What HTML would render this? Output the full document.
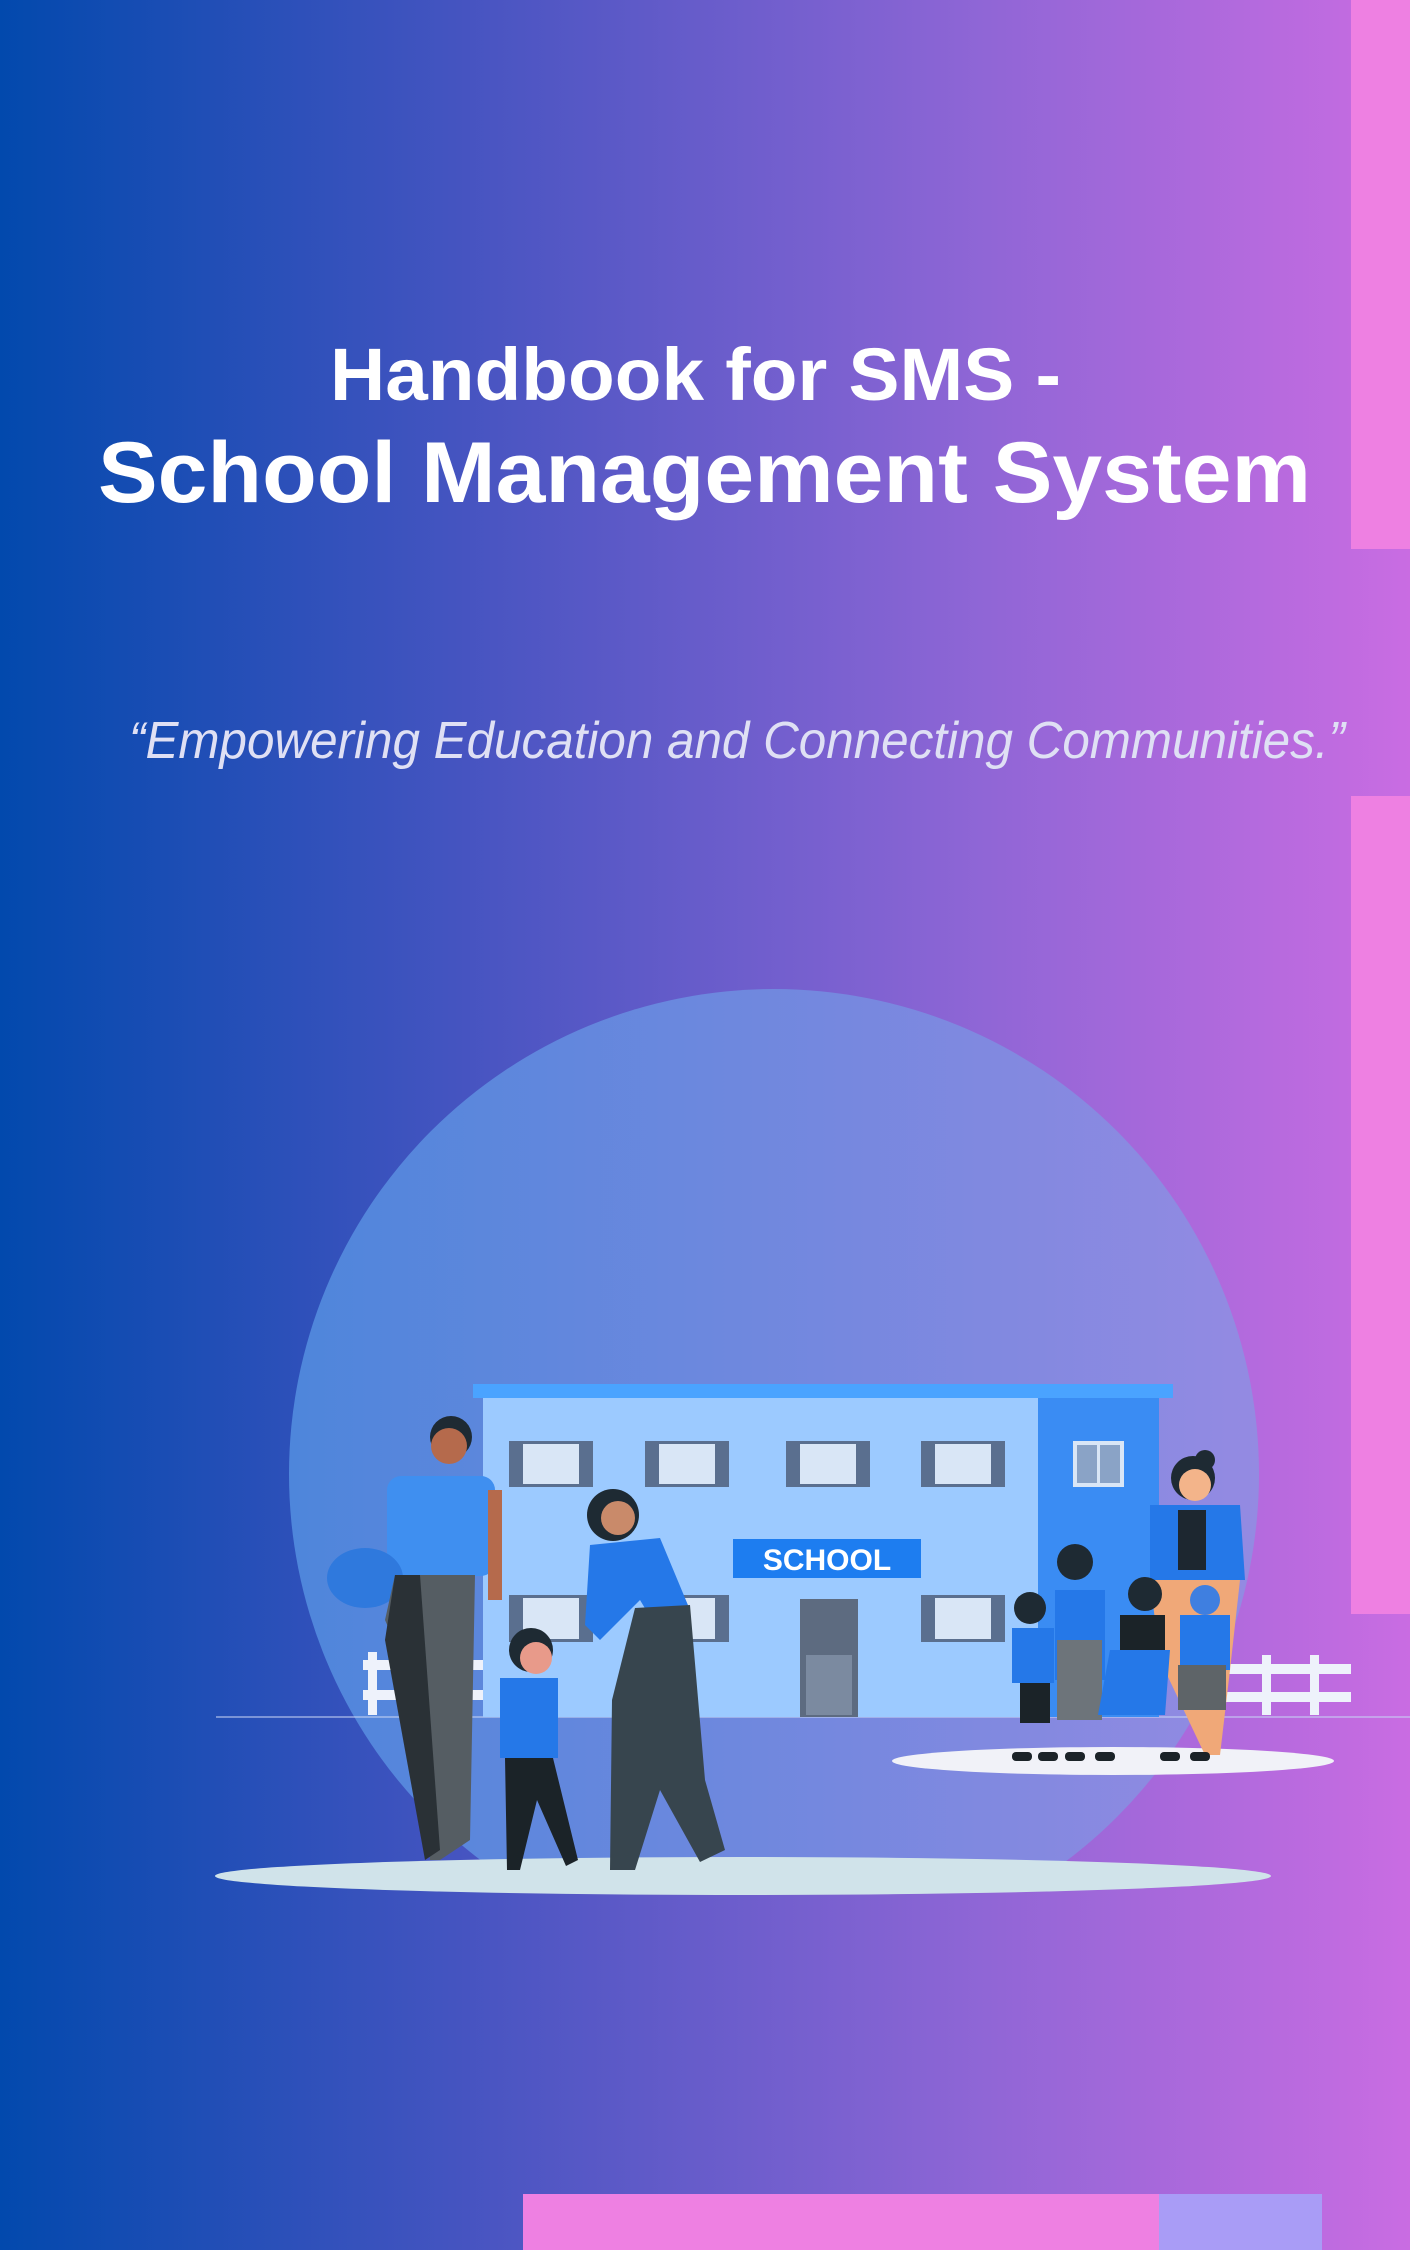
<!DOCTYPE html>
<html><head><meta charset="utf-8"><style>html,body{margin:0;padding:0}body{width:1410px;height:2250px;overflow:hidden}</style></head>
<body>
<svg width="1410" height="2250" viewBox="0 0 1410 2250" xmlns="http://www.w3.org/2000/svg">
<defs>
<linearGradient id="bg" x1="0" y1="0" x2="1" y2="0">
<stop offset="0" stop-color="#0249ad"/><stop offset="0.35" stop-color="#4a55c2"/><stop offset="0.7" stop-color="#9066d6"/><stop offset="1" stop-color="#c96ce2"/>
</linearGradient>
<linearGradient id="circ" x1="0" y1="0" x2="1" y2="0">
<stop offset="0" stop-color="#4e86db"/><stop offset="1" stop-color="#948ae2"/>
</linearGradient>
<clipPath id="cc"><rect x="0" y="0" width="1410" height="1876"/></clipPath>
</defs>
<rect width="1410" height="2250" fill="url(#bg)"/>
<rect x="1351" y="0" width="59" height="549" fill="#ee80e2"/>
<rect x="1351" y="796" width="59" height="818" fill="#ee80e2"/>
<rect x="523" y="2194" width="636" height="56" fill="#ee80e2"/>
<rect x="1159" y="2194" width="163" height="56" fill="#a99cf6"/>

<g font-family="Liberation Sans, sans-serif" fill="#ffffff" font-weight="bold">
<text x="330" y="400" font-size="74" textLength="731" lengthAdjust="spacingAndGlyphs">Handbook for SMS -</text>
<text x="98" y="502" font-size="86" textLength="1213" lengthAdjust="spacingAndGlyphs">School Management System</text>
</g>
<text x="129" y="758" font-family="Liberation Sans, sans-serif" font-style="italic" font-size="52" fill="#dfe0f4" textLength="1216" lengthAdjust="spacingAndGlyphs">“Empowering Education and Connecting Communities.”</text>

<circle cx="774" cy="1474" r="485" fill="url(#circ)" clip-path="url(#cc)"/>
<line x1="216" y1="1717" x2="1410" y2="1717" stroke="#c8d4f4" stroke-width="1.5" opacity="0.7"/>

<!-- building -->
<rect x="483" y="1396" width="555" height="321" fill="#9ccaff"/>
<rect x="1038" y="1396" width="121" height="321" fill="#3a8cf3"/>
<rect x="473" y="1384" width="700" height="14" fill="#4aa3ff"/>
<g fill="#5a6f8f">
<rect x="509" y="1441" width="84" height="46"/><rect x="645" y="1441" width="84" height="46"/><rect x="786" y="1441" width="84" height="46"/><rect x="921" y="1441" width="84" height="46"/>
<rect x="509" y="1595" width="84" height="47"/><rect x="645" y="1595" width="84" height="47"/><rect x="921" y="1595" width="84" height="47"/>
</g>
<g fill="#d9e6f6">
<rect x="523" y="1444" width="56" height="40"/><rect x="659" y="1444" width="56" height="40"/><rect x="800" y="1444" width="56" height="40"/><rect x="935" y="1444" width="56" height="40"/>
<rect x="523" y="1598" width="56" height="41"/><rect x="659" y="1598" width="56" height="41"/><rect x="935" y="1598" width="56" height="41"/>
</g>
<rect x="1073" y="1441" width="51" height="46" fill="#d9e6f6"/><rect x="1077" y="1445" width="20" height="38" fill="#8aa3c6"/><rect x="1100" y="1445" width="20" height="38" fill="#8aa3c6"/>
<rect x="733" y="1539" width="188" height="39" fill="#1d7df0"/>
<text x="827" y="1570" text-anchor="middle" font-family="Liberation Sans, sans-serif" font-size="30" fill="#fff" font-weight="bold">SCHOOL</text>
<rect x="800" y="1599" width="58" height="118" fill="#5d6b80"/><rect x="806" y="1655" width="46" height="60" fill="#7b8aa0"/>
<!-- fences -->
<g fill="#eef2fb">
<rect x="363" y="1660" width="120" height="10"/><rect x="363" y="1690" width="120" height="10"/><rect x="368" y="1652" width="9" height="63"/><rect x="420" y="1652" width="9" height="63"/>
<rect x="1225" y="1664" width="126" height="10"/><rect x="1225" y="1692" width="126" height="10"/><rect x="1262" y="1655" width="9" height="60"/><rect x="1310" y="1655" width="9" height="60"/>
</g>
<!-- ground -->
<ellipse cx="743" cy="1876" rx="528" ry="19" fill="#d0e3ea"/>
<ellipse cx="1113" cy="1761" rx="221" ry="14" fill="#f1f2f8"/>

<!-- father -->
<circle cx="451" cy="1437" r="21" fill="#1e2a33"/><circle cx="449" cy="1446" r="18" fill="#b56a4c"/>
<rect x="387" y="1476" width="108" height="100" rx="14" fill="#3f8ff0"/>
<rect x="488" y="1490" width="14" height="110" fill="#b56a4c"/>
<ellipse cx="365" cy="1578" rx="38" ry="30" fill="#2f79dd"/>
<path d="M395 1575 L475 1575 L470 1840 L440 1860 L430 1860 L420 1700 L385 1620 Z" fill="#555d63"/>
<path d="M395 1575 L420 1575 L440 1850 L425 1860 L385 1640 Z" fill="#2a3136"/>
<!-- mother -->
<circle cx="613" cy="1515" r="26" fill="#1e2a33"/><circle cx="618" cy="1518" r="17" fill="#c98a6a"/>
<path d="M590 1545 L660 1538 L690 1610 L655 1625 L640 1600 L600 1640 L585 1625 Z" fill="#2578e8"/>
<path d="M635 1608 L690 1605 L705 1780 L725 1850 L700 1862 L660 1790 L635 1870 L610 1870 L612 1700 Z" fill="#37454e"/>
<!-- boy -->
<circle cx="531" cy="1650" r="22" fill="#1e2a33"/><circle cx="536" cy="1658" r="16" fill="#e89a8a"/>
<rect x="500" y="1678" width="58" height="80" fill="#2578e8"/>
<path d="M505 1758 L553 1758 L578 1860 L566 1866 L537 1800 L520 1870 L507 1870 Z" fill="#1b2328"/>
<!-- right group -->
<circle cx="1205" cy="1460" r="10" fill="#1e2a33"/><circle cx="1193" cy="1478" r="22" fill="#1e2a33"/><circle cx="1195" cy="1485" r="16" fill="#f3b48a"/>
<path d="M1150 1505 L1240 1505 L1245 1580 L1150 1580 Z" fill="#2578e8"/><rect x="1178" y="1510" width="28" height="60" fill="#1d2730"/>
<path d="M1150 1580 L1240 1580 L1230 1670 L1220 1755 L1205 1755 L1160 1660 Z" fill="#f0a878"/>
<circle cx="1075" cy="1562" r="18" fill="#1e2a33"/><rect x="1055" y="1590" width="50" height="90" fill="#2578e8"/><rect x="1057" y="1640" width="45" height="80" fill="#6d747a"/>
<circle cx="1030" cy="1608" r="16" fill="#1e2a33"/><rect x="1012" y="1628" width="42" height="55" fill="#2578e8"/><rect x="1020" y="1683" width="30" height="40" fill="#1b2328"/>
<circle cx="1145" cy="1594" r="17" fill="#1e2a33"/><rect x="1120" y="1615" width="45" height="95" fill="#1b2328"/><path d="M1110 1650 L1170 1650 L1165 1715 L1098 1715 Z" fill="#2578e8"/>
<circle cx="1205" cy="1600" r="15" fill="#3f7fe0"/><rect x="1180" y="1615" width="50" height="55" fill="#2578e8"/><rect x="1178" y="1665" width="48" height="45" fill="#5e6468"/>
<g fill="#1b2328"><rect x="1012" y="1752" width="20" height="9" rx="4"/><rect x="1038" y="1752" width="20" height="9" rx="4"/><rect x="1065" y="1752" width="20" height="9" rx="4"/><rect x="1095" y="1752" width="20" height="9" rx="4"/><rect x="1160" y="1752" width="20" height="9" rx="4"/><rect x="1190" y="1752" width="20" height="9" rx="4"/></g>
</svg>
</body></html>
